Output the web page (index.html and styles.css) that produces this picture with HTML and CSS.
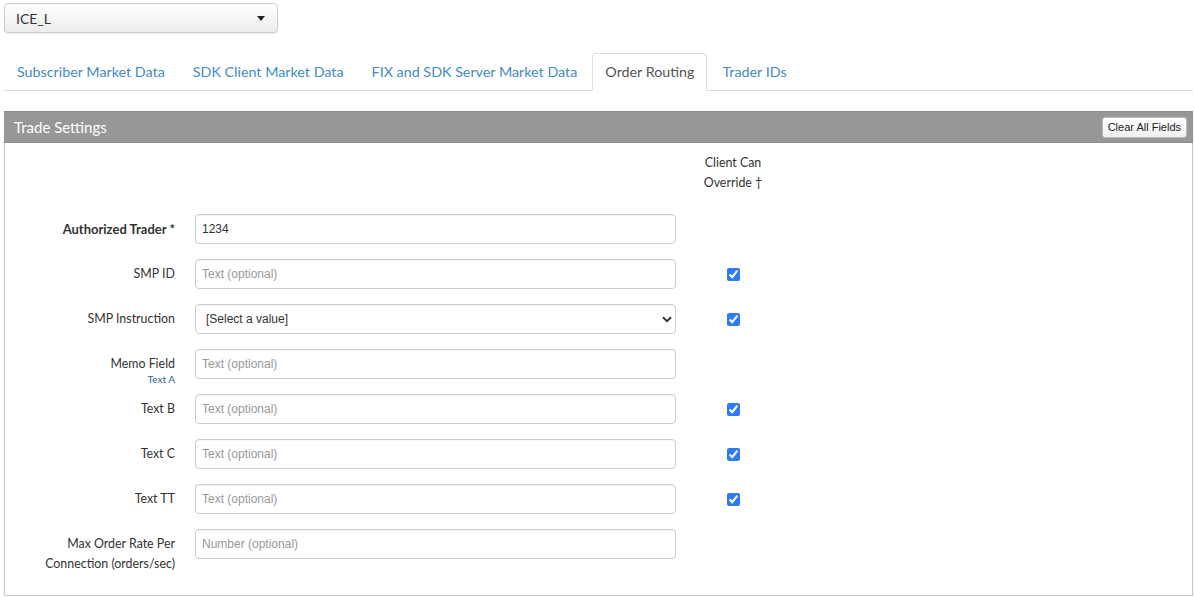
FILE: index.html
```html
<!doctype html>
<html lang="en">
<head>
  <meta charset="UTF-8" />
  <title>Order Routing</title>
  <link rel="stylesheet" href="styles.css">
</head>
<body>
  <div class="page">
    <div class="exchange-select">
      <span class="exchange-name">ICE_L</span>
      <span class="caret"></span>
    </div>

    <ul class="tabs">
      <li class="tab"><a href="#">Subscriber Market Data</a></li>
      <li class="tab"><a href="#">SDK Client Market Data</a></li>
      <li class="tab"><a href="#">FIX and SDK Server Market Data</a></li>
      <li class="tab active"><a href="#">Order Routing</a></li>
      <li class="tab"><a href="#">Trader IDs</a></li>
    </ul>

    <div class="panel">
      <div class="panel-heading">
        <span class="panel-title">Trade Settings</span>
        <button class="clear-btn">Clear All Fields</button>
      </div>

      <form class="panel-body">
        <div class="form-row header-row">
          <div></div>
          <div></div>
          <div class="override-head">Client Can<br>Override &dagger;</div>
        </div>

        <div class="form-row">
          <label class="field-label required">Authorized Trader *</label>
          <input class="field" type="text" value="1234">
          <div class="override"></div>
        </div>

        <div class="form-row">
          <label class="field-label">SMP ID</label>
          <input class="field" type="text" placeholder="Text (optional)">
          <div class="override"><input type="checkbox" checked></div>
        </div>

        <div class="form-row">
          <label class="field-label">SMP Instruction</label>
          <div class="select-wrap">
            <select class="field select-field">
              <option>[Select a value]</option>
            </select>
            <svg class="chevron" width="10" height="7" viewBox="0 0 10 7"><path d="M1 1.2 L5 5.2 L9 1.2" fill="none" stroke="#333" stroke-width="2"/></svg>
          </div>
          <div class="override"><input type="checkbox" checked></div>
        </div>

        <div class="form-row">
          <label class="field-label">Memo Field<span class="sub-label">Text A</span></label>
          <input class="field" type="text" placeholder="Text (optional)">
          <div class="override"></div>
        </div>

        <div class="form-row">
          <label class="field-label">Text B</label>
          <input class="field" type="text" placeholder="Text (optional)">
          <div class="override"><input type="checkbox" checked></div>
        </div>

        <div class="form-row">
          <label class="field-label">Text C</label>
          <input class="field" type="text" placeholder="Text (optional)">
          <div class="override"><input type="checkbox" checked></div>
        </div>

        <div class="form-row">
          <label class="field-label">Text TT</label>
          <input class="field" type="text" placeholder="Text (optional)">
          <div class="override"><input type="checkbox" checked></div>
        </div>

        <div class="form-row last-row">
          <label class="field-label">Max Order Rate Per Connection (orders/sec)</label>
          <input class="field" type="text" placeholder="Number (optional)">
          <div class="override"></div>
        </div>
      </form>
    </div>
  </div>
</body>
</html>
```

FILE: styles.css
```css
body {
  margin: 0;
  padding: 0;
  background-color: #fff;
  color: #333;
  font-family: Lato, "Open Sans", sans-serif;
  font-size: 13px;
}

.page {
  padding: 3px 2px 0 4px;
}

/* exchange dropdown */
.exchange-select {
  display: flex;
  align-items: center;
  justify-content: space-between;
  padding: 0 12px 0 11px;
  box-sizing: border-box;
  width: 274px;
  height: 30px;
  border: 1px solid #ccc;
  border-radius: 4px;
  background: linear-gradient(#fff, #ececec);
  box-shadow: 0 1px 1px rgba(0, 0, 0, 0.08);
  font-size: 14px;
  color: #333;
}

.caret {
  width: 0;
  height: 0;
  border-left: 4px solid transparent;
  border-right: 4px solid transparent;
  border-top: 5px solid #222;
}

/* tabs */
.tabs {
  list-style: none;
  margin: 20px 0 20px 0;
  padding: 0;
  display: flex;
  border-bottom: 1px solid #ddd;
}

.tab {
  margin-right: 2px;
  margin-bottom: -1px;
}

.tab a {
  display: block;
  padding: 8px 12px;
  line-height: 20px;
  font-size: 14.3px;
  color: #428bca;
  text-decoration: none;
  border: 1px solid transparent;
  border-radius: 4px 4px 0 0;
}

.tab.active a {
  color: #555;
  background-color: #fff;
  border-color: #ddd;
  border-bottom-color: #fff;
}

/* panel */
.panel {
  border: 1px solid #c9c9c9;
  box-shadow: 0 1px 2px rgba(0, 0, 0, 0.12);
}

.panel-heading {
  display: flex;
  justify-content: space-between;
  align-items: center;
  height: 30px;
  padding: 0 6px 0 10px;
  background-color: #979797;
  border-bottom: 1px solid #8c8c8c;
  margin: -1px -1px 0 -1px;
  border-top: 1px solid #8c8c8c;
}

.panel-title {
  color: #fff;
  font-size: 15px;
}

.clear-btn {
  height: 21px;
  padding: 0 5px;
  font-family: "Liberation Sans", Arial, sans-serif;
  font-size: 11px;
  color: #222;
  background: linear-gradient(#fff, #f0f0f0);
  border: 1px solid #bbb;
  border-radius: 3px;
}

.panel-body {
  margin: 0;
  padding: 10px 0 21px 0;
}

.form-row {
  display: grid;
  grid-template-columns: 170px 481px 74px;
  column-gap: 20px;
  height: 30px;
  margin-bottom: 15px;
}

.header-row {
  height: auto;
  margin-bottom: 21px;
}

.last-row {
  height: auto;
  margin-bottom: 0;
}

.override-head {
  line-height: 20px;
  font-size: 12.4px;
  text-align: center;
}

.field-label {
  text-align: right;
  padding-top: 5px;
  line-height: 20px;
  font-size: 12.4px;
}

.required {
  font-weight: bold;
  font-size: 13px;
}

.sub-label {
  display: block;
  font-size: 10px;
  line-height: 10px;
  color: #2a6496;
}

.field {
  box-sizing: border-box;
  width: 481px;
  height: 30px;
  margin: 0;
  padding: 0 6px;
  border: 1px solid #ccc;
  border-radius: 4px;
  box-shadow: inset 0 1px 1px rgba(0, 0, 0, 0.04);
  font-family: "Liberation Sans", Arial, sans-serif;
  font-size: 12px;
  color: #333;
  background-color: #fff;
}

.field::placeholder {
  color: #999;
}

.select-wrap {
  position: relative;
}

.select-field {
  appearance: none;
  -webkit-appearance: none;
  padding-left: 10px;
  font-size: 12px;
  color: #333;
}

.chevron {
  position: absolute;
  right: 4px;
  top: 12px;
}

.override {
  display: flex;
  align-items: center;
  justify-content: center;
}

.override input {
  width: 13px;
  height: 13px;
  margin: 0;
  accent-color: #2f7bf5;
}
```
